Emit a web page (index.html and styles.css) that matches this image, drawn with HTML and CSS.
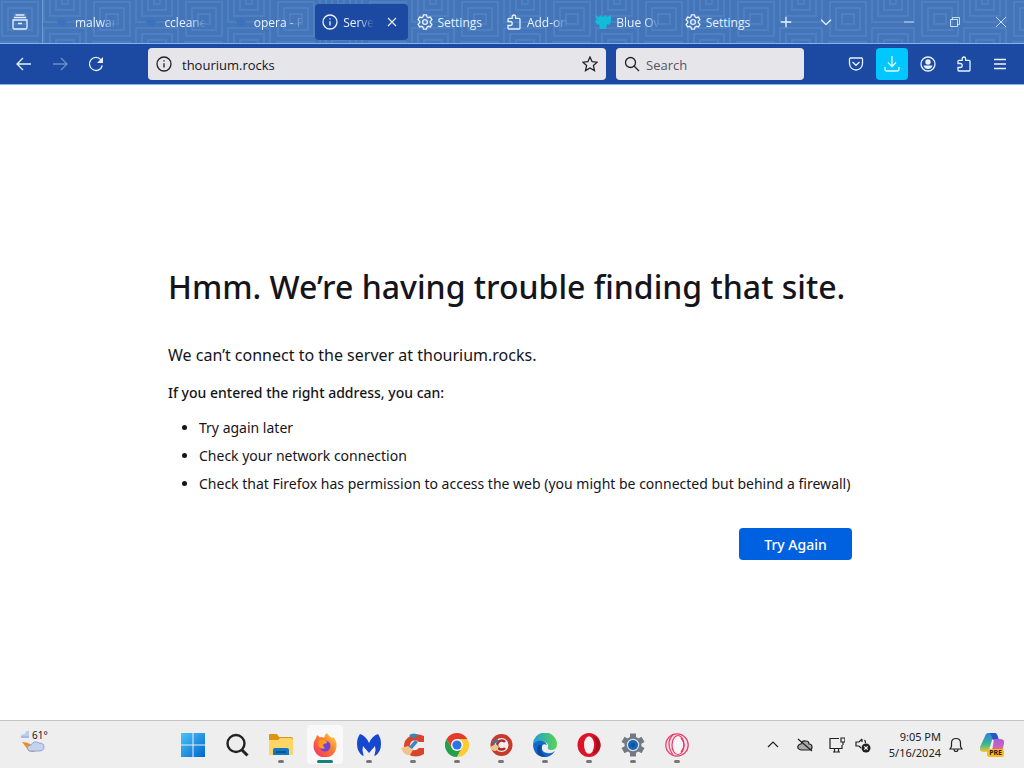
FILE: index.html
```
<!DOCTYPE html>
<html lang="en">
<head>
    <meta charset="UTF-8">
    <meta name="viewport" content="width=device-width, initial-scale=1.0">
    <title>Server Not Found</title>
    <link rel="stylesheet" href="styles.css">
</head>
<body>

<!-- Shared icons -->
<svg class="sprite" width="0" height="0" aria-hidden="true">
    <symbol id="gear" viewBox="0 0 16 16">
        <path d="M6.500.8h3l.5 2.100 1.300.8 2.100-.6 1.500 2.600-1.600 1.500v1.600l1.600 1.500-1.500 2.600-2.100-.6-1.300.8-.5 2.100h-3L6 13.100l-1.300-.8-2.100.6-1.500-2.600 1.600-1.500V7.200L1.100 5.700l1.500-2.600 2.100.6L6 2.900z"/>
        <circle cx="8" cy="8" r="2.400"/>
    </symbol>
    <symbol id="info" viewBox="0 0 16 16">
        <circle cx="8" cy="8" r="7"/>
        <path d="M8 7.200v4.300M8 4.300v1.300"/>
    </symbol>
    <symbol id="puzzle" viewBox="0 0 16 16">
        <path d="M2 7.500V5.200q0-.9.900-.9h3.300V2.700a1.700 1.700 0 0 1 3.400 0v1.600h3.500q.9 0 .9.900v8.900q0 .9-.9.900H2.900q-.9 0-.9-.9v-2.600h2.200a2 2 0 0 0 0-4z"/>
    </symbol>
    <symbol id="swirl" viewBox="0 0 16 16">
        <path d="M3 3l2 2 4-1 4 4-3 5-5-2-2-4z" fill="#3c72bd" stroke="none"/>
    </symbol>
</svg>

<header class="tabstrip">
    <svg class="pattern" aria-hidden="true">
        <defs>
            <pattern id="maze" width="92" height="60" patternUnits="userSpaceOnUse">
                <g fill="none" stroke="#6fa0d8" stroke-width="2">
                    <path d="M2 2h36v34H2zM8 8h24v22H8zM14 14h12v10H14z"/>
                    <path d="M44-4v26h42V-4M50-4v20h30V-4M56-4v14h18V-4M62-4v8h6v-8"/>
                    <path d="M44 60V28h42v32M50 60V34h30v26M56 60V40h18v20M62 60V46h6v14"/>
                    <path d="M0 42h38v18M0 48h32v12M0 54h26v6"/>
                </g>
            </pattern>
        </defs>
        <rect width="100%" height="100%" fill="url(#maze)"/>
    </svg>

    <button class="view-button" aria-label="Firefox View">
        <svg class="icon" viewBox="0 0 16 16"><path d="M3.500 1h9M2 3.500h12M1 6h14v7.500q0 1.500-1.500 1.500h-11Q1 15 1 13.500zM6 9.500h4"/></svg>
    </button>

    <nav class="tabs">
        <button class="tab"><svg class="icon"><use href="#swirl"/></svg><span class="label fade">malwar</span></button>
        <button class="tab"><svg class="icon"><use href="#swirl"/></svg><span class="label fade">ccleane</span></button>
        <button class="tab"><svg class="icon"><use href="#swirl"/></svg><span class="label fade">opera - F</span></button>
        <div class="tab active">
            <button class="tab-main"><svg class="icon"><use href="#info"/></svg><span class="label fade">Serve</span></button>
            <button class="tab-close" aria-label="Close tab"><svg class="icon small" viewBox="0 0 12 12"><path d="M2 2l8 8M10 2l-8 8"/></svg></button>
        </div>
        <button class="tab"><svg class="icon"><use href="#gear"/></svg><span class="label">Settings</span></button>
        <button class="tab"><svg class="icon"><use href="#puzzle"/></svg><span class="label fade">Add-on</span></button>
        <button class="tab"><svg class="icon" viewBox="0 0 16 16"><path d="M0 1l4 2 1-2 3 2 3-2 1 2 4-2v7l-2 3-2-1-1 5H5l-1-5-2 1-2-4 2-1z" fill="#12bcd8" stroke="none"/></svg><span class="label fade">Blue Ov</span></button>
        <button class="tab"><svg class="icon"><use href="#gear"/></svg><span class="label">Settings</span></button>
    </nav>

    <div class="tab-tools">
        <button aria-label="New tab"><svg class="icon" viewBox="0 0 16 16"><path d="M8 1v14M1 8h14"/></svg></button>
        <button aria-label="List all tabs"><svg class="icon" viewBox="0 0 16 16"><path d="M1.500 5L8 11.500 14.500 5"/></svg></button>
    </div>

    <div class="window-controls">
        <button aria-label="Minimize"><svg class="icon small" viewBox="0 0 12 12"><path d="M1 6h10"/></svg></button>
        <button aria-label="Restore"><svg class="icon small" viewBox="0 0 12 12"><path d="M1.500 3.500h7v7h-7zM3.500 3.500v-2h7v7h-2"/></svg></button>
        <button aria-label="Close"><svg class="icon small" viewBox="0 0 12 12"><path d="M1 1l10 10M11 1L1 11"/></svg></button>
    </div>
</header>

<div class="navbar">
    <div class="nav-buttons">
        <button aria-label="Back"><svg class="icon" viewBox="0 0 16 16"><path d="M15 8H1.500M7 2L1 8l6 6"/></svg></button>
        <button aria-label="Forward" disabled><svg class="icon" viewBox="0 0 16 16"><path d="M1 8h13.500M9 2l6 6-6 6"/></svg></button>
        <button aria-label="Reload"><svg class="icon" viewBox="0 0 16 16"><path d="M14.300 9.500A6.500 6.500 0 1 1 13 3.800"/><path d="M15 1v6H9z" fill="currentColor" stroke="none"/></svg></button>
    </div>

    <div class="field url-field">
        <svg class="icon"><use href="#info"/></svg>
        <input type="text" value="thourium.rocks" aria-label="Address">
        <button aria-label="Bookmark this page"><svg class="icon" viewBox="0 0 16 16"><path d="M8 1l2.100 4.700 5.100.5-3.800 3.400 1.100 5L8 12l-4.500 2.600 1.100-5L.8 6.200l5.100-.5z"/></svg></button>
    </div>

    <div class="field search-field">
        <svg class="icon" viewBox="0 0 16 16"><circle cx="6.500" cy="6.500" r="5"/><path d="M10 10l5 5"/></svg>
        <input type="text" placeholder="Search" aria-label="Search">
    </div>

    <div class="nav-buttons">
        <button aria-label="Save to Pocket"><svg class="icon" viewBox="0 0 16 16"><path d="M2.500 2h11q1 0 1 1v4.500a6.500 6.500 0 0 1-13 0V3q0-1 1-1zM4.500 6L8 9.300 11.500 6"/></svg></button>
        <button class="download" aria-label="Downloads"><svg class="icon" viewBox="0 0 16 16"><path d="M8 0v10M4 6.500l4 4 4-4M1 11v2q0 2 2 2h10q2 0 2-2v-2"/></svg></button>
        <button aria-label="Account"><svg class="icon" viewBox="0 0 16 16"><circle cx="8" cy="8" r="7"/><circle cx="8" cy="6" r="2.700" fill="currentColor" stroke="none"/><path d="M3.500 9.500h9q-1 3.500-4.500 3.500T3.500 9.500z" fill="currentColor" stroke="none"/></svg></button>
        <button aria-label="Extensions"><svg class="icon"><use href="#puzzle"/></svg></button>
        <button aria-label="Menu"><svg class="icon" viewBox="0 0 16 16"><path d="M2 3.500h12M2 8h12M2 12.500h12"/></svg></button>
    </div>
</div>

<main>
    <h1>Hmm. We’re having trouble finding that site.</h1>
    <p class="lead">We can’t connect to the server at thourium.rocks.</p>
    <p class="hint">If you entered the right address, you can:</p>
    <ul>
        <li>Try again later</li>
        <li>Check your network connection</li>
        <li>Check that Firefox has permission to access the web (you might be connected but behind a firewall)</li>
    </ul>
    <button class="try-again">Try Again</button>
</main>

<footer class="taskbar">
    <button class="weather" aria-label="Weather">
        <svg width="30" height="28" viewBox="0 0 30 28" aria-hidden="true">
            <path d="M1 11q-1-4 4-4 1-4 4-3v7z" fill="#b9cdf0"/>
            <path d="M1 10h8" stroke="#8ca6da"/>
            <path d="M2 15q5 0 8 2l6 7q-7 3-10-4z" fill="#f08a24"/>
            <path d="M9 24q-4-5 2-6 3-5 8-2 5 0 5 4 0 4-5 4z" fill="#c3d2ef" stroke="#8fa5d0"/>
        </svg>
        <span class="temp">61°</span>
    </button>

    <div class="apps">
        <button class="app" aria-label="Start"><svg viewBox="0 0 24 24">
            <defs><linearGradient id="win" x2="1" y2="1"><stop stop-color="#4cc4f8"/><stop offset="1" stop-color="#0067ce"/></linearGradient></defs>
            <path d="M0 0h11.500v11.500H0zM12.500 0H24v11.500H12.500zM0 12.500h11.500V24H0zM12.500 12.500H24V24H12.500z" fill="url(#win)"/></svg></button>
        <button class="app" aria-label="Search"><svg viewBox="0 0 24 24" fill="none" stroke="#222" stroke-width="2.400"><circle cx="11" cy="10.500" r="8.500"/><path d="M17 17l5.500 5.500" stroke-width="3"/></svg></button>
        <button class="app running" aria-label="File Explorer"><svg viewBox="0 0 24 24">
            <path d="M0 2q0-1 1-1h7l2 3h12q2 0 2 2v5H0z" fill="#dc9414"/>
            <path d="M0 7h9l2-2h11q2 0 2 2v14q0 1-1 1H1q-1 0-1-1z" fill="#ffd566"/>
            <path d="M4 22v-5q0-2 2-2h12q2 0 2 2v5z" fill="#1276c5"/><path d="M7 19h10" stroke="#075492" stroke-width="2"/></svg></button>
        <button class="app running current" aria-label="Firefox"><svg viewBox="0 0 24 24">
            <defs><linearGradient id="fox" x1="1" x2="0" y2="1"><stop stop-color="#ffe34a"/><stop offset=".45" stop-color="#ff7a2b"/><stop offset="1" stop-color="#f02a70"/></linearGradient></defs>
            <path d="M14 0q2 4 5 5l1-1q4 4 3.500 9A11.500 11.500 0 0 1 .5 13Q.5 8 3 5l1-3q2 1 2.500 2.500Q9 3.500 11 5q0-3 3-5z" fill="url(#fox)"/>
            <circle cx="12" cy="13" r="5.500" fill="#7441d8"/>
            <path d="M5.500 8q3-2 6-1l3 2q-1 2-4 2-1 3 2 4-5 2-7-2z" fill="#ff9a26"/></svg></button>
        <button class="app running" aria-label="Malwarebytes"><svg viewBox="0 0 24 24">
            <path d="M3 1q6 2 9 9 3-7 9-9 3 4 3 10 0 8-6 12-1 0 0-3 1-3 0-7l-6 7-6-7q-1 4 0 7 1 3 0 3-6-4-6-12Q0 5 3 1z" fill="#1548cf"/></svg></button>
        <button class="app running" aria-label="CCleaner"><svg viewBox="0 0 24 24">
            <path d="M23 3v6h-5q-3-3-7-1-4 4-1 8 4 3 8-1h5v6q-9 5-16 0-6-6-3-13Q11-2 23 3z" fill="#d9442b"/>
            <path d="M8 2q5-3 9 0l-4 4z" fill="#3686b8"/>
            <path d="M14 7l3 2-6 7-3-2z" fill="#3b87c5"/>
            <path d="M0 15l7-2 5 4-3 5q-6 1-9-7z" fill="#efc58c"/></svg></button>
        <button class="app running" aria-label="Chrome"><svg viewBox="0 0 24 24">
            <path d="M1.600 6A12 12 0 0 0 12 24l5-9H7z" fill="#25a04a"/>
            <path d="M12 24A12 12 0 0 0 22.400 6H12l5 9z" fill="#fdcb2f"/>
            <path d="M1.600 6A12 12 0 0 1 22.400 6H12l-5 9z" fill="#e33b2e"/>
            <circle cx="12" cy="12" r="6" fill="#fff"/><circle cx="12" cy="12" r="4.600" fill="#2f73e6"/></svg></button>
        <button class="app running" aria-label="CCleaner Browser"><svg viewBox="0 0 24 24">
            <circle cx="12.500" cy="12" r="9" fill="#f5eeee" stroke="#c53a2a" stroke-width="4"/>
            <path d="M16 9a4.500 4.500 0 1 0 0 6" fill="none" stroke="#a92b23" stroke-width="2.500"/>
            <path d="M1 14l6-3 3 3-3 4q-5 0-6-4z" fill="#edc78d"/><path d="M4 10l5-3" stroke="#3978aa" stroke-width="3"/></svg></button>
        <button class="app running" aria-label="Edge"><svg viewBox="0 0 24 24">
            <defs><linearGradient id="edge" x2="1"><stop stop-color="#219bd9"/><stop offset="1" stop-color="#5ad552"/></linearGradient></defs>
            <path d="M0 12A12 12 0 0 1 24 11q0 6-6 6-4 0-3-3 1-4-4-5Q4 8 0 12z" fill="url(#edge)"/>
            <path d="M0 12q3-5 9-4 4 1 5 4-4-2-5 1-1 6 5 7 4 1 8-2-4 6-10 6Q1 24 0 12z" fill="#1268ca"/>
            <path d="M9 12q-3 7 4 12Q3 24 4 15q1-4 5-3z" fill="#0b4b9c"/></svg></button>
        <button class="app running" aria-label="Opera"><svg viewBox="0 0 24 24">
            <ellipse cx="12" cy="12" rx="11.500" ry="12" fill="#dc1427"/><ellipse cx="12" cy="12" rx="5" ry="8.700" fill="#f3f3f3"/>
            <path d="M16 3q6 8 0 18 8-3 7.500-9Q23 5 16 3z" fill="#a90f1f"/></svg></button>
        <button class="app running" aria-label="Settings"><svg viewBox="0 0 24 24">
            <circle cx="12" cy="12" r="8.500" fill="#737980"/>
            <g stroke="#737980" stroke-width="6"><path d="M12 0.500v23M2 6.300l20 11.400M22 6.300L2 17.700"/></g>
            <circle cx="12" cy="12" r="6.200" fill="#d3e3f3"/><circle cx="12" cy="12" r="5" fill="#1764b8"/><circle cx="12" cy="12" r="2" fill="#0c4f9b"/></svg></button>
        <button class="app running" aria-label="Opera GX"><svg viewBox="0 0 24 24" fill="none" stroke="#e33c69" stroke-width="1.200">
            <circle cx="12" cy="12" r="11.200" fill="#fbdde5"/><ellipse cx="13" cy="12" rx="6" ry="9.500" fill="#f6f6f6"/><path d="M8 1.500Q0 10 8 22M16 5q6 7 0 14"/></svg></button>
    </div>

    <div class="tray">
        <button aria-label="Show hidden icons"><svg class="icon" viewBox="0 0 16 16"><path d="M3 10l5-5 5 5"/></svg></button>
        <button aria-label="OneDrive"><svg class="icon" viewBox="0 0 16 16"><path d="M4 13q-4-1-3-4 1-2 3-2 1-4 5-3 3 0 3 3 3 0 3 3t-3 3z" fill="#aaa"/><path d="M1 2l14 12"/></svg></button>
        <button aria-label="Network"><svg class="icon" viewBox="0 0 16 16"><path d="M10 1.500H1v10h12V8M4 15h7M5.500 11.500V15M9.500 11.500V15M12 1h4v4h-4zM14 5v3"/></svg></button>
        <button class="sound" aria-label="Volume"><svg class="icon" viewBox="0 0 16 16"><path d="M7 2L4 5H1v4h3l2 2M7 2v3M9.500 3q1 1 1 3"/><circle cx="11" cy="11" r="4.500" fill="#222" stroke="none"/><path d="M9.300 9.300l3.400 3.400M12.700 9.300l-3.400 3.400" stroke="#fff"/></svg></button>
        <div class="clock">
            <time datetime="21:05">9:05 PM</time>
            <time datetime="2024-05-16">5/16/2024</time>
        </div>
        <button class="bell" aria-label="Notifications"><svg class="icon" viewBox="0 0 16 16"><path d="M2 12l1.500-2.500V6q0-4.500 4.500-4.500T12.500 6v3.500L14 12zM6 12q0 2.500 2 2.500t2-2.500"/></svg></button>
        <button class="copilot" aria-label="Copilot">
            <svg width="24" height="24" viewBox="0 0 24 24" aria-hidden="true">
                <defs>
                    <linearGradient id="copA" x2="0" y2="1"><stop stop-color="#2b7fe8"/><stop offset=".6" stop-color="#3fb88a"/><stop offset="1" stop-color="#f0c93a"/></linearGradient>
                    <linearGradient id="copB" x2="0" y2="1"><stop stop-color="#a95be0"/><stop offset="1" stop-color="#f0708a"/></linearGradient>
                </defs>
                <path d="M6 1q1-1 3-1h7q-2 1-3 4L9 17q-1 2-3 2H3q-4 0-3-5z" fill="url(#copA)"/>
                <path d="M10 0h5q2 0 3 4l1 3h-5q-2 0-2-2t-2-5z" fill="#2457c8"/>
                <path d="M14 6h6q5 0 4 5l-2 7q-1 4-4 4H9q2-1 3-4z" fill="url(#copB)"/>
            </svg>
            <span class="badge">PRE</span>
        </button>
    </div>
</footer>

</body>
</html>
```
FILE: styles.css
```
* {
    margin: 0;
    padding: 0;
    box-sizing: border-box;
}
body {
    font-family: "Noto Sans", "Open Sans", sans-serif;
    font-size: 14px;
    color: #15141a;
    background: #fff;
    min-height: 100vh;
    display: flex;
    flex-direction: column;
}
button {
    font: inherit;
    color: inherit;
    background: none;
    border: none;
    display: flex;
    align-items: center;
    justify-content: center;
}
.sprite {
    position: absolute;
}
.icon {
    width: 16px;
    height: 16px;
    flex: none;
    fill: none;
    stroke: currentColor;
    stroke-width: 1.3;
}
.icon.small {
    width: 12px;
    height: 12px;
    stroke-width: 1.1;
}

/* Tab strip */
.tabstrip {
    position: relative;
    display: flex;
    height: 44px;
    background: #4375b8;
    border-bottom: 1px solid #80b4ee;
    color: #e8f2ff;
    font-family: "Open Sans", sans-serif;
    font-size: 12px;
}
.pattern {
    position: absolute;
    width: 100%;
    height: 100%;
    opacity: 0.25;
}
.view-button,
.tabs,
.tab-tools,
.window-controls {
    position: relative;
}
.view-button {
    width: 43px;
    padding-right: 3px;
    border-right: 1px solid #6b9bd5;
}
.tabs {
    display: flex;
    padding: 4px 0 3px 3px;
    flex: 0 1 723px;
    min-width: 0;
}
.tab {
    flex: 1;
    min-width: 0;
    padding: 0 4px 0 8px;
    gap: 5px;
    justify-content: flex-start;
}
.tab .label {
    min-width: 0;
    padding-top: 2px;
    line-height: 18px;
    white-space: nowrap;
}
.tab .fade {
    mask-image: linear-gradient(to left, transparent, #000 16px);
}
.tab.active {
    display: flex;
    align-items: center;
    margin: 0 1px;
    padding: 0 8px 0 7px;
    background: #1c4aa3;
    border-radius: 4px;
    gap: 0;
}
.tab-main {
    flex: 1;
    min-width: 0;
    gap: 5px;
    justify-content: flex-start;
}
.tab-close {
    width: 16px;
    height: 16px;
}
.tab-tools {
    display: flex;
}
.tab-tools button {
    width: 40px;
}
.tab-tools .icon {
    width: 12px;
    height: 12px;
    stroke-width: 1.8;
}
.window-controls {
    display: flex;
    margin-left: auto;
}
.window-controls button {
    width: 46px;
}
.window-controls .icon {
    stroke-width: 0.8;
}

/* Navigation bar */
.navbar {
    display: flex;
    align-items: center;
    padding: 4px 8px;
    background: #1c4aa3;
    border-bottom: 1px solid #80b4ee;
    color: #e8f2ff;
}
.nav-buttons {
    display: flex;
    gap: 4px;
}
.nav-buttons button {
    width: 32px;
    height: 32px;
    border-radius: 4px;
}
.nav-buttons button:disabled {
    opacity: 0.4;
}
.nav-buttons .download {
    background: #00c8ff;
}
.field {
    display: flex;
    align-items: center;
    gap: 6px;
    height: 32px;
    padding: 0 8px;
    background: #e6e6ea;
    border-radius: 4px;
    color: #222;
    min-width: 0;
}
.field input {
    flex: 1;
    min-width: 0;
    font-family: "Open Sans", sans-serif;
    font-size: 13px;
    line-height: 20px;
    padding-top: 1px;
    color: #15141a;
    background: none;
    border: none;
    outline: none;
}
.field input::placeholder {
    color: #55555f;
    opacity: 1;
}
.url-field {
    flex: 18;
    margin: 0 10px 0 36px;
    gap: 10px;
}
.search-field {
    flex: 7;
    margin-right: 36px;
}

/* Error page */
main {
    flex: 1;
    padding: 180px 168px 32px;
}
h1 {
    font-size: 32px;
    font-weight: 500;
    line-height: 44px;
    margin-bottom: 34px;
}
.lead {
    font-size: 16px;
    line-height: 24px;
    margin-bottom: 14px;
}
.hint {
    font-weight: 500;
    line-height: 24px;
    margin-bottom: 9px;
}
ul {
    padding-left: 31px;
}
li {
    line-height: 28px;
}
.try-again {
    margin: 30px 4px 0 auto;
    width: 113px;
    height: 32px;
    color: #fff;
    font-weight: 500;
    background: #0061e0;
    border-radius: 4px;
}

/* Taskbar */
.taskbar {
    display: flex;
    height: 48px;
    background: #eee;
    border-top: 1px solid #c4c4c8;
}
.weather {
    width: 171px;
    padding-left: 20px;
    justify-content: flex-start;
    align-items: flex-start;
    padding-top: 6px;
    position: relative;
}
.temp {
    position: absolute;
    left: 32px;
    top: 6px;
    font-size: 10px;
    line-height: 16px;
}
.apps {
    display: flex;
}
.app {
    width: 44px;
    position: relative;
}
.app svg {
    width: 24px;
    height: 24px;
    flex: none;
}
.app.running::after {
    content: "";
    position: absolute;
    bottom: 5px;
    left: 19px;
    width: 6px;
    height: 3px;
    border-radius: 2px;
    background: #777;
}
.app.current {
    border: 4px solid transparent;
    background: #f9f9f9 padding-box;
    border-radius: 8px;
}
.app.current::after {
    bottom: 1px;
    left: 10px;
    width: 16px;
    background: #148078;
}
.tray {
    display: flex;
    align-items: center;
    margin-left: auto;
    padding-right: 16px;
    color: #222;
}
.tray button {
    width: 32px;
    height: 40px;
}
.tray .icon {
    stroke-width: 1.2;
}
.tray .sound {
    width: 20px;
}
.clock {
    display: flex;
    flex-direction: column;
    width: 68px;
    font-size: 11px;
    line-height: 16px;
    text-align: right;
}
.tray .bell {
    width: 30px;
}
.tray .copilot {
    width: 32px;
    margin-left: 5px;
    position: relative;
}
.badge {
    position: absolute;
    right: 4px;
    bottom: 8px;
    padding: 0 2px;
    font-size: 7px;
    font-weight: 700;
    line-height: 8px;
    background: #fdbb14;
    border-radius: 2px;
}
```
